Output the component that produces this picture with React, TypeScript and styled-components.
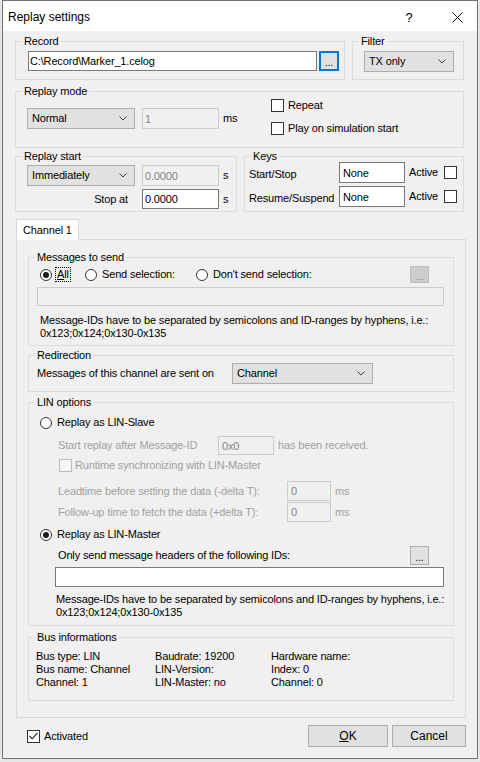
import styled, { createGlobalStyle } from 'styled-components'

type CheckProps = { label: string; checked?: boolean; disabled?: boolean; gap?: number }
type RadioProps = { label: string; on?: boolean; focus?: boolean; w?: number }

const Chevron = () => (
  <svg width="8" height="5" viewBox="0 0 8 5">
    <polyline points="0.5,0.5 4,4 7.5,0.5" fill="none" stroke="#3c3c3c" strokeWidth="1" />
  </svg>
)

const CloseIcon = () => (
  <svg width="11" height="11" viewBox="0 0 11 11">
    <path d="M0.5 0.5 L10.5 10.5 M10.5 0.5 L0.5 10.5" stroke="#111" strokeWidth="1" />
  </svg>
)

const CheckBox = ({ label, checked, disabled, gap }: CheckProps) => (
  <CheckRow $gray={disabled} $gap={gap ?? 4}>
    <Box $disabled={disabled}>
      {checked && (
        <svg width="9" height="8" viewBox="0 0 9 8">
          <polyline points="0.5,4 3.2,6.8 8.5,0.8" fill="none" stroke="#1e1e1e" strokeWidth="1.1" />
        </svg>
      )}
    </Box>
    {label}
  </CheckRow>
)

const RadioOption = ({ label, on, focus, w }: RadioProps) => (
  <RadioLabel $w={w}>
    <RadioDot $on={on} />
    {focus ? (
      <Focus>
        <u>A</u>
        {label.slice(1)}
      </Focus>
    ) : (
      label
    )}
  </RadioLabel>
)

const NOTE = 'Message-IDs have to be separated by semicolons and ID-ranges by hyphens, i.e.:'

const App = () => {
  return (
    <>
      <GlobalStyle />
      <Window>
        <TitleBar>
          <Title>Replay settings</Title>
          <Caption $w={40} $mr={8}>?</Caption>
          <Caption $w={40}>
            <CloseIcon />
          </Caption>
        </TitleBar>

        <Body>
          <Line $gap={7} $top>
            <Group $w={330} $h={45}>
              <Legend>Record</Legend>
              <Line $mt={4} $ml={12} $gap={2}>
                <Field $w={289} $h={20} $pl={1} readOnly defaultValue={'C:\\Record\\Marker_1.celog'} />
                <SmallButton $w={20} $h={20} $focus>...</SmallButton>
              </Line>
            </Group>
            <Group $w={112} $h={45}>
              <Legend>Filter</Legend>
              <Line $mt={4} $ml={11}>
                <Combo $w={90} $h={21}>
                  TX only
                  <Chevron />
                </Combo>
              </Line>
            </Group>
          </Line>

          <Group $h={63} $mt={5}>
            <Legend>Replay mode</Legend>
            <Line $mt={2} $ml={11} $top>
              <Line $w={244} $mt={9}>
                <Combo $w={108} $h={21}>
                  Normal
                  <Chevron />
                </Combo>
                <Field $w={77} $h={21} $ml={7} disabled defaultValue="1" />
                <Text $ml={4}>ms</Text>
              </Line>
              <Stack $gap={10}>
                <CheckBox label="Repeat" />
                <CheckBox label="Play on simulation start" />
              </Stack>
            </Line>
          </Group>

          <Line $gap={7} $mt={2} $top>
            <Group $w={222} $h={62}>
              <Legend>Replay start</Legend>
              <Line $mt={3} $ml={11}>
                <Combo $w={108} $h={21}>
                  Immediately
                  <Chevron />
                </Combo>
                <Field $w={77} $h={21} $ml={7} disabled defaultValue="0.0000" />
                <Text $ml={4}>s</Text>
              </Line>
              <Line $mt={3} $ml={11}>
                <Text $w={101} $right>
                  Stop at
                </Text>
                <Field $w={77} $h={20} $ml={14} defaultValue="0.0000" />
                <Text $ml={4}>s</Text>
              </Line>
            </Group>
            <Group $w={220} $h={62}>
              <Legend>Keys</Legend>
              <KeyGrid>
                <Text $mt={3}>Start/Stop</Text>
                <Field $w={66} $h={21} $pl={3} defaultValue="None" />
                <Text $ml={4}>Active</Text>
                <Box />
                <Text $mt={3}>Resume/Suspend</Text>
                <Field $w={66} $h={21} $pl={3} defaultValue="None" />
                <Text $ml={4}>Active</Text>
                <Box />
              </KeyGrid>
            </Group>
          </Line>

          <TabStrip>
            <Tab>Channel 1</Tab>
          </TabStrip>
          <Panel>
            <Group $h={95}>
              <Legend>Messages to send</Legend>
              <Line $mt={3} $ml={11} $pr={24} $h={17}>
                <RadioOption label="All" on focus w={45} />
                <RadioOption label="Send selection:" w={111} />
                <RadioOption label="Don't send selection:" />
                <SmallButton $w={19} $h={17} $disabled $auto>
                  ...
                </SmallButton>
              </Line>
              <Field $w={407} $h={19} $ml={8} $mt={4} disabled />
              <Note $ml={11} $mt={8}>
                {NOTE}
                <br />
                0x123;0x124;0x130-0x135
              </Note>
            </Group>

            <Group $h={43} $mt={3}>
              <Legend>Redirection</Legend>
              <Line $mt={2} $ml={8}>
                <Text $w={195}>Messages of this channel are sent on</Text>
                <Combo $w={141} $h={21}>
                  Channel
                  <Chevron />
                </Combo>
              </Line>
            </Group>

            <Group $h={230} $mt={4}>
              <Legend>LIN options</Legend>
              <Line $mt={6} $ml={11} $h={17}>
                <RadioOption label="Replay as LIN-Slave" />
              </Line>
              <Line $mt={5} $ml={29}>
                <Text $w={160} $gray>
                  Start replay after Message-ID
                </Text>
                <Field $w={56} $h={19} $pl={3} disabled defaultValue="0x0" />
                <Text $ml={4} $gray>
                  has been received.
                </Text>
              </Line>
              <Line $mt={4} $ml={30}>
                <CheckBox label="Runtime synchronizing with LIN-Master" disabled gap={3} />
              </Line>
              <Line $mt={9} $ml={29}>
                <Text $w={229} $gray>
                  Leadtime before setting the data (-delta T):
                </Text>
                <Field $w={44} $h={20} $pl={3} disabled defaultValue="0" />
                <Text $ml={4} $gray>
                  ms
                </Text>
              </Line>
              <Line $mt={1} $ml={29}>
                <Text $w={229} $gray>
                  Follow-up time to fetch the data (+delta T):
                </Text>
                <Field $w={44} $h={20} $pl={3} disabled defaultValue="0" />
                <Text $ml={4} $gray>
                  ms
                </Text>
              </Line>
              <Line $mt={4} $ml={11} $h={17}>
                <RadioOption label="Replay as LIN-Master" on />
              </Line>
              <Line $mt={3} $ml={29} $pr={24} $h={19}>
                <Text>Only send message headers of the following IDs:</Text>
                <SmallButton $w={19} $h={19} $auto>
                  ...
                </SmallButton>
              </Line>
              <Field $w={389} $h={20} $ml={26} $mt={2} />
              <Note $ml={27} $mt={6}>
                {NOTE}
                <br />
                0x123;0x124;0x130-0x135
              </Note>
            </Group>

            <Group $h={70} $mt={5}>
              <Legend>Bus informations</Legend>
              <BusGrid>
                <span>Bus type: LIN</span>
                <span>Baudrate: 19200</span>
                <span>Hardware name:</span>
                <span>Bus name: Channel</span>
                <span>LIN-Version:</span>
                <span>Index: 0</span>
                <span>Channel: 1</span>
                <span>LIN-Master: no</span>
                <span>Channel: 0</span>
              </BusGrid>
            </Group>
          </Panel>

          <Footer>
            <CheckBox label="Activated" checked />
            <Button $w={80} $auto>
              <u>O</u>K
            </Button>
            <Button $w={74} $ml={4}>
              Cancel
            </Button>
          </Footer>
        </Body>
      </Window>
    </>
  )
}

export default App

const GlobalStyle = createGlobalStyle`
  * { box-sizing: border-box; }
  body {
    margin: 0;
    background: #e6e6e6;
  }
`

const Window = styled.div`
  margin-left: 2px;
  width: 476px;
  height: 759px;
  border: 1px solid #707070;
  background: #f0f0f0;
  display: flex;
  flex-direction: column;
  font-family: "Liberation Sans", Arial, sans-serif;
  font-size: 11px;
  line-height: 13px;
  letter-spacing: -0.15px;
  color: #000;
`

const TitleBar = styled.div`
  height: 30px;
  flex: none;
  background: #fff;
  display: flex;
  align-items: center;
  padding: 2px 0 0 5px;
  letter-spacing: 0;
`

const Title = styled.div`
  flex: 1;
  font-size: 12px;
`

const Caption = styled.div<{ $w: number; $mr?: number }>`
  width: ${({ $w }) => $w}px;
  margin-right: ${({ $mr }) => $mr ?? 0}px;
  height: 100%;
  display: flex;
  align-items: center;
  justify-content: center;
  font-size: 13px;
`

const Body = styled.div`
  flex: 1;
  display: flex;
  flex-direction: column;
  padding: 4px 13px 0 12px;
`

const Line = styled.div<{ $gap?: number; $mt?: number; $ml?: number; $pr?: number; $h?: number; $w?: number; $top?: boolean }>`
  display: flex;
  align-items: ${({ $top }) => ($top ? 'flex-start' : 'center')};
  gap: ${({ $gap }) => $gap ?? 0}px;
  margin: ${({ $mt }) => $mt ?? 0}px 0 0 ${({ $ml }) => $ml ?? 0}px;
  padding-right: ${({ $pr }) => $pr ?? 0}px;
  ${({ $h }) => ($h ? `height: ${$h}px;` : '')}
  ${({ $w }) => ($w ? `width: ${$w}px; flex: none;` : '')}
`

const Stack = styled.div<{ $gap: number }>`
  display: flex;
  flex-direction: column;
  gap: ${({ $gap }) => $gap}px;
`

const Group = styled.fieldset<{ $w?: number; $h: number; $mt?: number }>`
  margin: ${({ $mt }) => $mt ?? 0}px 0 0 0;
  padding: 0;
  min-width: 0;
  flex: none;
  width: ${({ $w }) => ($w ? `${$w}px` : 'auto')};
  height: ${({ $h }) => $h}px;
  border: 1px solid #dcdcdc;
`

const Legend = styled.legend`
  margin-left: 6px;
  padding: 0 2px;
  line-height: 12px;
  font-size: 11px;
`

const Text = styled.span<{ $w?: number; $ml?: number; $mt?: number; $gray?: boolean; $right?: boolean }>`
  flex: none;
  ${({ $w }) => ($w ? `width: ${$w}px;` : '')}
  margin: ${({ $mt }) => $mt ?? 0}px 0 0 ${({ $ml }) => $ml ?? 0}px;
  color: ${({ $gray }) => ($gray ? '#a0a0a0' : '#000')};
  text-align: ${({ $right }) => ($right ? 'right' : 'left')};
  white-space: nowrap;
`

const Note = styled.div<{ $ml: number; $mt: number }>`
  margin: ${({ $mt }) => $mt}px 0 0 ${({ $ml }) => $ml}px;
  white-space: nowrap;
`

const Field = styled.input<{ $w: number; $h?: number; $pl?: number; $ml?: number; $mt?: number }>`
  display: block;
  flex: none;
  width: ${({ $w }) => $w}px;
  height: ${({ $h }) => $h ?? 20}px;
  margin: ${({ $mt }) => $mt ?? 0}px 0 0 ${({ $ml }) => $ml ?? 0}px;
  padding: 0 0 0 ${({ $pl }) => $pl ?? 2}px;
  border: 1px solid #7a7a7a;
  background: #fff;
  font: inherit;
  letter-spacing: inherit;
  color: #000;
  outline: none;
  &:disabled {
    border-color: #cccccc;
    background: #f0f0f0;
    color: #838383;
  }
`

const Combo = styled.div<{ $w: number; $h: number }>`
  flex: none;
  width: ${({ $w }) => $w}px;
  height: ${({ $h }) => $h}px;
  display: flex;
  align-items: center;
  justify-content: space-between;
  padding: 0 7px 0 4px;
  background: #e1e1e1;
  border: 1px solid #adadad;
`

const SmallButton = styled.div<{ $w: number; $h: number; $focus?: boolean; $disabled?: boolean; $auto?: boolean }>`
  flex: none;
  width: ${({ $w }) => $w}px;
  height: ${({ $h }) => $h}px;
  margin-left: ${({ $auto }) => ($auto ? 'auto' : '0')};
  display: flex;
  align-items: center;
  justify-content: center;
  padding-top: 3px;
  font-size: 10px;
  color: ${({ $disabled }) => ($disabled ? '#8d8d8d' : '#000')};
  background: ${({ $disabled }) => ($disabled ? '#cccccc' : '#e1e1e1')};
  border: ${({ $focus, $disabled }) =>
    $focus ? '2px solid #0078d7' : $disabled ? '1px solid #bfbfbf' : '1px solid #adadad'};
`

const Button = styled.div<{ $w: number; $ml?: number; $auto?: boolean }>`
  flex: none;
  width: ${({ $w }) => $w}px;
  height: 22px;
  margin-left: ${({ $auto, $ml }) => ($auto ? 'auto' : `${$ml ?? 0}px`)};
  display: flex;
  align-items: center;
  justify-content: center;
  background: #e1e1e1;
  border: 1px solid #adadad;
  font-size: 12px;
  letter-spacing: 0;
`

const CheckRow = styled.label<{ $gray?: boolean; $gap: number }>`
  display: flex;
  align-items: center;
  gap: ${({ $gap }) => $gap}px;
  height: 13px;
  color: ${({ $gray }) => ($gray ? '#a0a0a0' : '#000')};
  white-space: nowrap;
`

const Box = styled.span<{ $disabled?: boolean }>`
  flex: none;
  width: 13px;
  height: 13px;
  display: flex;
  align-items: center;
  justify-content: center;
  border: 1px solid ${({ $disabled }) => ($disabled ? '#bcbcbc' : '#333')};
  background: ${({ $disabled }) => ($disabled ? '#f7f7f7' : '#fff')};
`

const RadioLabel = styled.label<{ $w?: number }>`
  flex: none;
  display: flex;
  align-items: center;
  gap: 5px;
  ${({ $w }) => ($w ? `width: ${$w}px;` : '')}
  white-space: nowrap;
`

const RadioDot = styled.span<{ $on?: boolean }>`
  flex: none;
  width: 12px;
  height: 12px;
  border-radius: 50%;
  border: 1px solid #333;
  background: #fff;
  display: flex;
  align-items: center;
  justify-content: center;
  &::after {
    content: '';
    width: 6px;
    height: 6px;
    border-radius: 50%;
    background: #1a1a1a;
    display: ${({ $on }) => ($on ? 'block' : 'none')};
  }
`

const Focus = styled.span`
  outline: 1px dotted #000;
  outline-offset: 0;
  padding: 0 1px;
  margin-left: -1px;
`

const KeyGrid = styled.div`
  display: grid;
  grid-template-columns: 90px 66px 39px 13px;
  row-gap: 3px;
  align-items: center;
  margin-left: 4px;
`

const TabStrip = styled.div`
  display: flex;
  margin-top: 7px;
  padding-left: 1px;
`

const Tab = styled.div`
  position: relative;
  z-index: 1;
  width: 63px;
  height: 21px;
  margin-bottom: -1px;
  display: flex;
  align-items: center;
  padding-left: 6px;
  background: #fff;
  border: 1px solid #d9d9d9;
  border-bottom: none;
`

const Panel = styled.div`
  margin: 0 -2px 0 1px;
  padding: 11px 11px 16px 11px;
  border: 1px solid #d9d9d9;
  display: flex;
  flex-direction: column;
`

const BusGrid = styled.div`
  display: grid;
  grid-template-columns: 119px 116px auto;
  margin: 7px 0 0 7px;
  white-space: nowrap;
`

const Footer = styled.div`
  display: flex;
  align-items: center;
  height: 22px;
  margin: 7px -2px 0 12px;
`
